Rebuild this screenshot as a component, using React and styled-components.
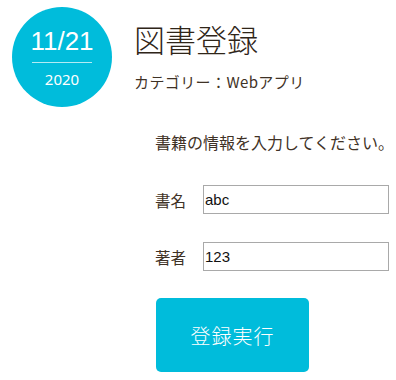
import React from 'react';
import styled, { createGlobalStyle } from 'styled-components';

const GlobalStyle = createGlobalStyle`
  body {
    margin: 0;
    background: #fff;
    font-family: "Noto Sans CJK JP", "Liberation Sans", sans-serif;
    color: #3f3226;
  }
`;

const Page = styled.div`
  width: 396px;
  height: 380px;
  overflow: hidden;
`;

const Header = styled.header`
  display: flex;
  align-items: flex-start;
  padding: 7px 0 0 12px;
`;

const DateBadge = styled.div`
  width: 100px;
  height: 100px;
  border-radius: 50%;
  background: #00bcdb;
  color: #fff;
  display: flex;
  flex-direction: column;
  align-items: center;
  font-family: "Liberation Sans", "Noto Sans", sans-serif;
`;

const Day = styled.div`
  font-size: 26px;
  line-height: 1;
  margin-top: 21px;
`;

const Rule = styled.hr`
  width: 60px;
  border: none;
  border-top: 1px solid rgba(255, 255, 255, 0.7);
  margin: 8px 0 0;
`;

const Year = styled.div`
  font-family: "Noto Sans", sans-serif;
  font-size: 15px;
  font-weight: 400;
  line-height: 1;
  margin-top: 9px;
`;

const TitleBlock = styled.div`
  margin-left: 22px;
`;

const Title = styled.h1`
  margin: 10px 0 0;
  font-size: 31px;
  font-weight: 300;
  line-height: 44px;
  color: #2f2518;
`;

const Category = styled.div`
  margin-top: 11px;
  font-size: 15px;
  letter-spacing: 0.4px;
  line-height: 20px;
`;

const Form = styled.form`
  padding: 23px 0 0 155px;
`;

const Lead = styled.p`
  margin: 0 0 31px;
  font-size: 16px;
  line-height: 24px;
`;

const Row = styled.label`
  display: flex;
  align-items: center;
  margin-bottom: 28px;

  &:last-of-type {
    margin-bottom: 27px;
  }
`;

const LabelText = styled.span`
  width: 48px;
  font-size: 15.5px;
`;

const Input = styled.input`
  width: 186px;
  height: 29px;
  box-sizing: border-box;
  border: 1px solid #a9a9a9;
  padding: 0 1px;
  font-family: "Liberation Sans", sans-serif;
  font-size: 15px;
  font-weight: 400;
  color: #111;
  outline: none;
`;

const Submit = styled.button`
  display: block;
  width: 153px;
  height: 74px;
  margin: 0 0 0 1px;
  border: none;
  border-radius: 5px;
  background: #00bcdb;
  color: #fff;
  font-family: "Noto Sans CJK JP", sans-serif;
  font-size: 20px;
  font-weight: 300;
  letter-spacing: 1px;
  cursor: pointer;
`;

export default function App() {
  return (
    <Page>
      <GlobalStyle />
      <Header>
        <DateBadge>
          <Day>11/21</Day>
          <Rule />
          <Year>2020</Year>
        </DateBadge>
        <TitleBlock>
          <Title>図書登録</Title>
          <Category>カテゴリー：Webアプリ</Category>
        </TitleBlock>
      </Header>
      <Form onSubmit={(e) => e.preventDefault()}>
        <Lead>書籍の情報を入力してください。</Lead>
        <Row>
          <LabelText>書名</LabelText>
          <Input defaultValue="abc" />
        </Row>
        <Row>
          <LabelText>著者</LabelText>
          <Input defaultValue="123" />
        </Row>
        <Submit type="submit">登録実行</Submit>
      </Form>
    </Page>
  );
}
